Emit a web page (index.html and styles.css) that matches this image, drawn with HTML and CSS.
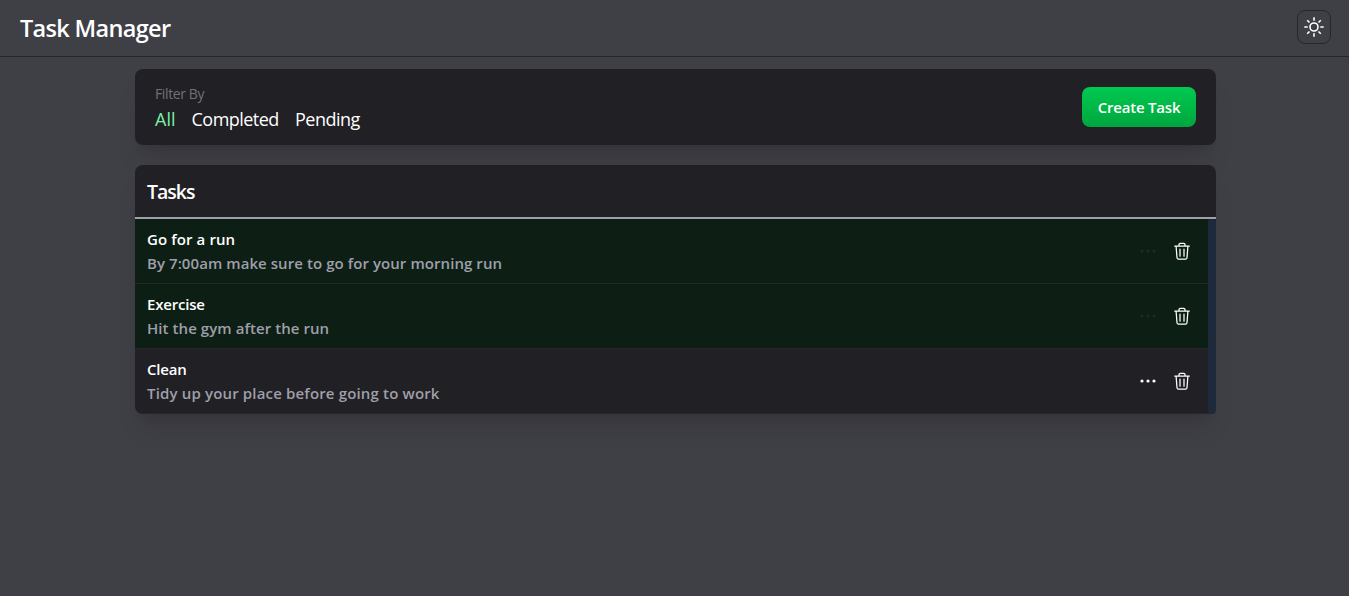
FILE: index.html
```html
<!DOCTYPE html>
<html lang="en">
<head>
<meta charset="utf-8">
<title>Task Manager</title>
<link rel="stylesheet" href="styles.css">
</head>
<body>
<svg class="sprite" aria-hidden="true">
  <symbol id="trash" viewBox="0 0 18 18"><path d="M1.7 4h14.6M3.1 4.2l.9 11.6q.1 1.2 1.2 1.2h7.6q1.1 0 1.2-1.2l.9-11.6M6 3.7V2.6q0-1.3 1.3-1.3h3.4q1.3 0 1.3 1.3v1.1M7 7v7.2M11 7v7.2" fill="none" stroke="currentColor" stroke-width="1.25" stroke-linecap="round"/></symbol>
  <symbol id="dots" viewBox="0 0 18 18"><g fill="currentColor"><circle cx="3" cy="9" r="1.6"/><circle cx="9" cy="9" r="1.6"/><circle cx="15" cy="9" r="1.6"/></g></symbol>
</svg>
<header class="header">
  <h1 class="brand">Task Manager</h1>
  <button class="theme" aria-label="Toggle theme"><svg viewBox="0 0 20 20" fill="none" stroke="currentColor" stroke-width="1.6"><circle cx="10" cy="10" r="4"/><path d="M10 .3v3.4M10 16.3v3.4M.3 10h3.4M16.3 10h3.4M3.2 3.2l2.3 2.3M14.5 14.5l2.3 2.3M3.2 16.8l2.3-2.3M14.5 5.5l2.3-2.3"/></svg></button>
</header>
<main class="main">
  <section class="card filters">
    <div>
      <div class="label">Filter By</div>
      <nav class="tabs"><a class="tab tab-all">All</a><a class="tab tab-completed">Completed</a><a class="tab">Pending</a></nav>
    </div>
    <button class="create">Create Task</button>
  </section>
  <section class="card tasks">
    <h2 class="title">Tasks</h2>
    <div class="scroll">
      <ul class="list">
        <li class="task done"><div><div class="name name-wide">Go for a run</div><div class="desc">By 7:00am make sure to go for your morning run</div></div><div class="actions"><svg class="dots"><use href="#dots"/></svg><svg><use href="#trash"/></svg></div></li>
        <li class="task done"><div><div class="name">Exercise</div><div class="desc">Hit the gym after the run</div></div><div class="actions"><svg class="dots"><use href="#dots"/></svg><svg><use href="#trash"/></svg></div></li>
        <li class="task"><div><div class="name">Clean</div><div class="desc desc-wide">Tidy up your place before going to work</div></div><div class="actions"><svg class="dots"><use href="#dots"/></svg><svg><use href="#trash"/></svg></div></li>
      </ul>
      <div class="track"></div>
    </div>
  </section>
</main>
</body>
</html>
```
FILE: styles.css
```css
* { box-sizing: border-box; margin: 0; padding: 0; }
body { min-height: 100vh; background: #3f3f46; color: #fff; font: 16px/24px "Segoe UI", "Open Sans", "Noto Sans", sans-serif; }
button { font: inherit; color: inherit; cursor: pointer; }
.sprite { display: none; }
.header { height: 57px; padding: 0 18px 2px 20px; display: flex; align-items: center; justify-content: space-between; border-bottom: 1px solid #27272a; }
.brand { font-size: 23.5px; line-height: 32px; font-weight: 600; letter-spacing: -.67px; padding-top: 2px; }
.theme { width: 34px; height: 34px; display: grid; place-items: center; border: 1px solid #27272a; border-radius: 8px; background: transparent; }
.theme svg { width: 20px; height: 20px; }
.main { width: 1081px; margin: 12px 0 0 135px; display: grid; gap: 20px; }
.card { background: #212024; border-radius: 8px; box-shadow: 0 20px 25px -5px rgba(0,0,0,.1), 0 8px 10px -6px rgba(0,0,0,.1); }
.filters { height: 76px; padding: 0 20px; display: flex; align-items: center; justify-content: space-between; }
.label { font-size: 14px; line-height: 20px; color: #71717b; letter-spacing: -.38px; padding-top: 2px; }
.tabs { display: flex; gap: 16px; padding-top: 1px; }
.tab { font-size: 18px; line-height: 28px; letter-spacing: -.52px; white-space: nowrap; }
.tab-all { color: #7bf1a8; width: 20.5px; letter-spacing: 0; }
.tab-completed { width: 87.5px; }
.create { width: 114px; height: 40px; border: 0; border-radius: 8px; background: linear-gradient(#00c950, #00a63e); font-size: 15px; font-weight: 600; letter-spacing: -.2px; white-space: nowrap; }
.title { height: 54px; padding: 13px 12px; font-size: 19.5px; line-height: 28px; font-weight: 600; letter-spacing: -1px; border-bottom: 2px solid #9f9fa9; }
.scroll { display: flex; }
.list { flex: 1; list-style: none; }
.task { height: 65px; padding: 8px 17px 8px 12px; display: flex; align-items: center; justify-content: space-between; border-bottom: 1px solid #27272a; }
.task:last-child { border-radius: 0 0 0 8px; }
.done { background: #0d1f15; }
.name { font-weight: 600; font-size: 15px; letter-spacing: -.2px; }
.name-wide { letter-spacing: .1px; }
.desc { font-weight: 600; font-size: 15px; color: #9f9fa9; letter-spacing: .07px; }
.desc-wide { letter-spacing: .16px; }
.actions { display: flex; gap: 16px; }
.actions svg { width: 18px; height: 18px; }
.done .dots { color: #27272a; }
.track { width: 8px; background: #1e293b; border-radius: 8px; }
```
